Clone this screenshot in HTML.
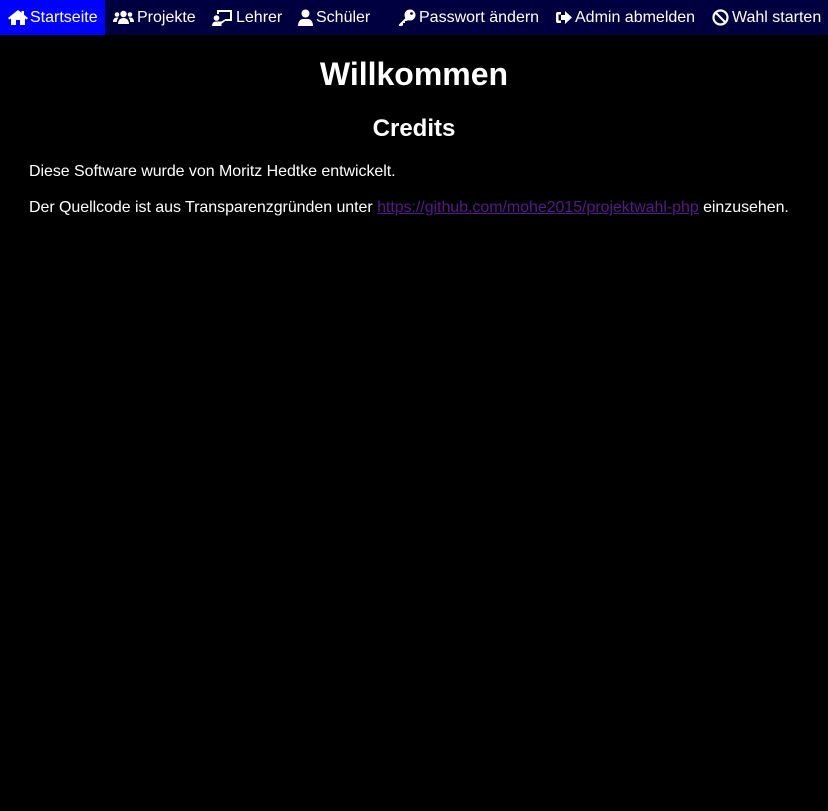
<!DOCTYPE html>
<html><head><meta charset="utf-8"><style>
html,body{margin:0;padding:0;background:#000;width:828px;height:811px;overflow:hidden;font-family:"Liberation Sans",sans-serif;color:#fff}
nav{position:absolute;left:0;top:0;width:828px;height:35px;background:#000040}
.act{position:absolute;left:0;top:0;width:105px;height:35px;background:#0000ff}
.it{position:absolute;top:0;height:35px;line-height:35px;font-size:16px;color:#fff;white-space:nowrap}
.ic{position:absolute;top:9px;fill:#fff}
h1{position:absolute;top:56px;left:0;width:828px;text-align:center;margin:0;font-size:32px;line-height:37px}
h2{position:absolute;top:115px;left:0;width:828px;text-align:center;margin:0;font-size:24px;line-height:28px}
p{position:absolute;left:29px;margin:0;font-size:16px;line-height:18px;white-space:nowrap;letter-spacing:-0.05px}
a{color:#551a8b}
</style></head><body>
<nav>
<div class="act"></div>
<svg class="ic" style="left:8px" width="20" height="17" viewBox="0 0 20 17"><path d="M10 1L0 9l1.5 1.6L3 9.4V16h5v-5h4v5h5V9.4l1.5 1.2L20 9 16 5.8V2h-2.5v1.8z"/></svg>
<span class="it" style="left:30px">Startseite</span>
<svg class="ic" style="left:113px" width="21" height="17" viewBox="0 0 21 17"><circle cx="10.5" cy="5" r="3.2"/><circle cx="4" cy="5.5" r="2.3"/><circle cx="17" cy="5.5" r="2.3"/><path d="M5 15c0-4 2.5-6 5.5-6s5.5 2 5.5 6z M0 13c0-3 1.5-4.5 4-4.5 1 0 1.5.3 1.5.3C4.3 10 3.8 11.5 3.8 13z M21 13c0-3-1.5-4.5-4-4.5-1 0-1.5.3-1.5.3 1.2 1.2 1.7 2.7 1.7 4.2z"/></svg>
<span class="it" style="left:137px">Projekte</span>
<svg class="ic" style="left:212px" width="21" height="17" viewBox="0 0 21 17"><path d="M5 1h15v11h-7v-2h5V3H7v2H5z"/><circle cx="4.5" cy="9" r="2.8"/><path d="M0 17c0-3 1.5-4.5 4.5-4.5h5l3-2 1 1.3-4 3V17z"/></svg>
<span class="it" style="left:236px">Lehrer</span>
<svg class="ic" style="left:298px" width="15" height="17" viewBox="0 0 15 17"><circle cx="7.5" cy="4.5" r="4"/><path d="M0 17c0-4.5 2.5-7 5-7h5c2.5 0 5 2.5 5 7z"/></svg>
<span class="it" style="left:316px">Schüler</span>
<svg class="ic" style="left:399px" width="17" height="17" viewBox="0 0 17 17"><circle cx="11" cy="6" r="5.5"/><path d="M7 8.5L0 15.5V17h3l1-1v-2h2v-2h2l1.5-1.5z"/><circle cx="12.5" cy="4.5" r="1.4" fill="#000040"/></svg>
<span class="it" style="left:419px">Passwort ändern</span>
<svg class="ic" style="left:555px" width="17" height="17" viewBox="0 0 17 17"><path d="M6 3H3a2 2 0 0 0-2 2v7a2 2 0 0 0 2 2h3v-2.5H3.5v-6H6z"/><path d="M10 2l7 6.5-7 6.5v-4H6V6h4z"/></svg>
<span class="it" style="left:575px">Admin abmelden</span>
<svg class="ic" style="left:712px" width="17" height="17" viewBox="0 0 17 17"><circle cx="8.5" cy="8.5" r="7" fill="none" stroke="#fff" stroke-width="2.2"/><path d="M3.5 3.5l10 10" stroke="#fff" stroke-width="2.2"/></svg>
<span class="it" style="left:732px">Wahl starten</span>
</nav>
<h1>Willkommen</h1>
<h2>Credits</h2>
<p style="top:163px">Diese Software wurde von Moritz Hedtke entwickelt.</p>
<p style="top:199px">Der Quellcode ist aus Transparenzgründen unter <a href="#">https://github.com/mohe2015/projektwahl-php</a> einzusehen.</p>
</body></html>
